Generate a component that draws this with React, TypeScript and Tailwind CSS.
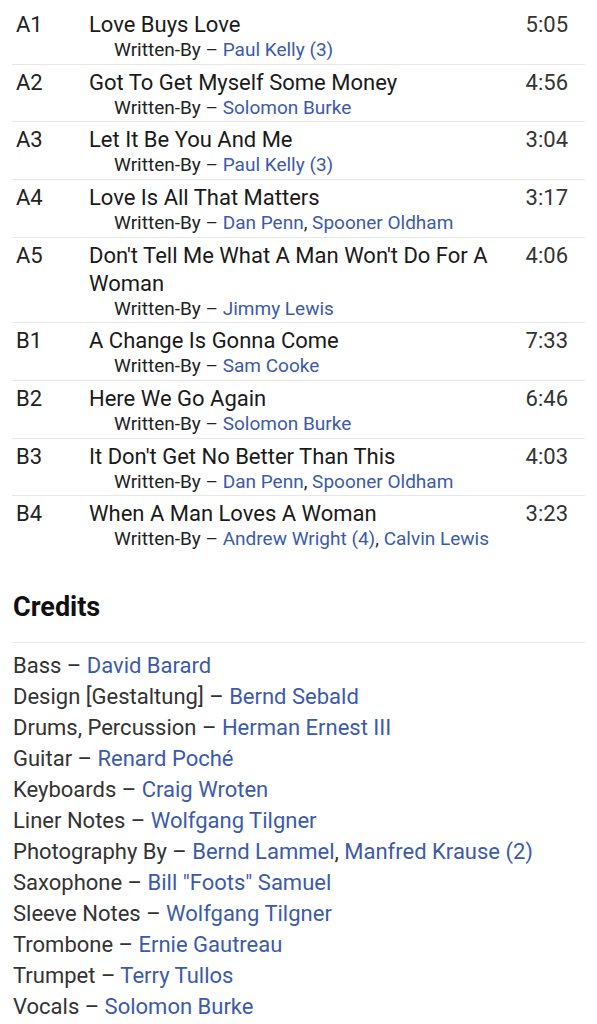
import React from "react";

type Track = { pos: string; title: string; writers: string[]; dur: string };

const tracks: Track[] = [
  { pos: "A1", title: "Love Buys Love", writers: ["Paul Kelly (3)"], dur: "5:05" },
  { pos: "A2", title: "Got To Get Myself Some Money", writers: ["Solomon Burke"], dur: "4:56" },
  { pos: "A3", title: "Let It Be You And Me", writers: ["Paul Kelly (3)"], dur: "3:04" },
  { pos: "A4", title: "Love Is All That Matters", writers: ["Dan Penn", "Spooner Oldham"], dur: "3:17" },
  { pos: "A5", title: "Don't Tell Me What A Man Won't Do For A Woman", writers: ["Jimmy Lewis"], dur: "4:06" },
  { pos: "B1", title: "A Change Is Gonna Come", writers: ["Sam Cooke"], dur: "7:33" },
  { pos: "B2", title: "Here We Go Again", writers: ["Solomon Burke"], dur: "6:46" },
  { pos: "B3", title: "It Don't Get No Better Than This", writers: ["Dan Penn", "Spooner Oldham"], dur: "4:03" },
  { pos: "B4", title: "When A Man Loves A Woman", writers: ["Andrew Wright (4)", "Calvin Lewis"], dur: "3:23" },
];

const credits: { role: string; names: string[] }[] = [
  { role: "Bass", names: ["David Barard"] },
  { role: "Design [Gestaltung]", names: ["Bernd Sebald"] },
  { role: "Drums, Percussion", names: ["Herman Ernest III"] },
  { role: "Guitar", names: ["Renard Poché"] },
  { role: "Keyboards", names: ["Craig Wroten"] },
  { role: "Liner Notes", names: ["Wolfgang Tilgner"] },
  { role: "Photography By", names: ["Bernd Lammel", "Manfred Krause (2)"] },
  { role: "Saxophone", names: ["Bill \"Foots\" Samuel"] },
  { role: "Sleeve Notes", names: ["Wolfgang Tilgner"] },
  { role: "Trombone", names: ["Ernie Gautreau"] },
  { role: "Trumpet", names: ["Terry Tullos"] },
  { role: "Vocals", names: ["Solomon Burke"] },
];

function Names({ names }: { names: string[] }) {
  return (
    <>
      {names.map((n, i) => (
        <React.Fragment key={i}>
          {i > 0 && <span>, </span>}
          <span className="text-[#3c5aad]">{n}</span>
        </React.Fragment>
      ))}
    </>
  );
}

export default function App() {
  return (
    <div
      className="bg-white w-[597px] min-h-[1024px] px-[12px] pt-[7px]"
      style={{ fontFamily: "Roboto, 'Noto Sans', sans-serif" }}
    >
      <div>
        {tracks.map((t, i) => (
          <div
            key={t.pos}
            className={`flex pt-[4px] pb-[2.67px] ${i < tracks.length - 1 ? "border-b border-[#e6e6e6]" : ""}`}
          >
            <div className="w-[77px] pl-[4px] text-[22px] leading-[28px] text-[#222] shrink-0">{t.pos}</div>
            <div className="flex-1 min-w-0">
              <div className="text-[22px] leading-[28px] text-[#1a1a1a] pr-[10px]">{t.title}</div>
              <div className="pl-[25px] text-[19px] leading-[22px] text-[#222]">
                Written-By – <Names names={t.writers} />
              </div>
            </div>
            <div className="w-[60px] text-right pr-[17px] box-content text-[22px] leading-[28px] text-[#333] shrink-0">
              {t.dur}
            </div>
          </div>
        ))}
      </div>

      <div className="mt-[38px] border-b border-[#e6e6e6] pb-[19px] pl-[1px]">
        <h2 className="text-[27px] leading-[32px] font-bold text-[#111]">Credits</h2>
      </div>
      <div className="pt-[7px] pl-[1px]">
        {credits.map((c) => (
          <div key={c.role} className="text-[22px] leading-[31px] text-[#333]">
            {c.role} – <Names names={c.names} />
          </div>
        ))}
      </div>
    </div>
  );
}
